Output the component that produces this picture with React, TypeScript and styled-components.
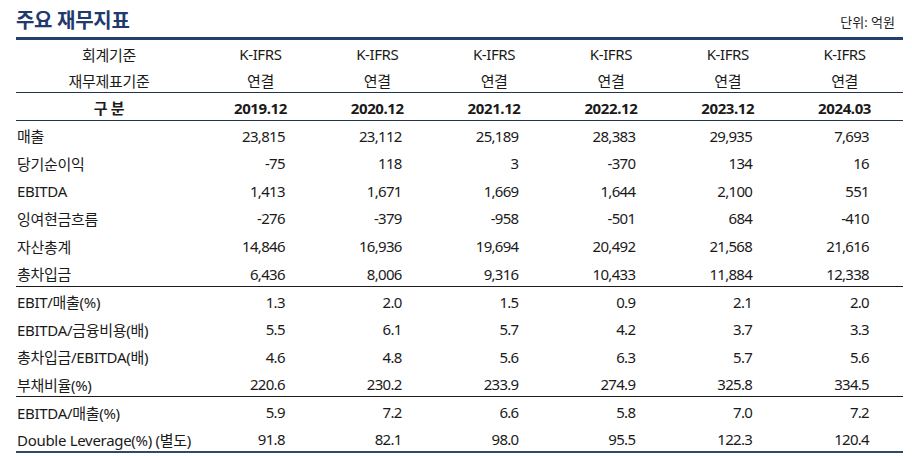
import styled, { createGlobalStyle } from 'styled-components';

const GlobalStyle = createGlobalStyle`
  html, body {
    margin: 0;
    padding: 0;
    background: #fff;
  }
  body {
    font-family: 'Noto Sans', 'Noto Sans CJK KR', sans-serif;
    color: #1a1a1a;
  }
`;

const Page = styled.div`
  width: 887px;
  padding: 0 9px 0 16px;
`;

const TitleBar = styled.div`
  display: flex;
  justify-content: space-between;
  align-items: flex-end;
  height: 37px;
`;

const Title = styled.h2`
  margin: 0 0 5px 0;
  font-size: 20px;
  font-weight: 700;
  color: #1f3a6e;
  line-height: 22px;
  letter-spacing: -0.3px;
`;

const Unit = styled.span`
  font-size: 13px;
  color: #222;
  margin: 0 8px 7px 0;
  line-height: 16px;
`;

const Table = styled.table`
  width: 100%;
  border-collapse: collapse;
  table-layout: fixed;
  border-top: 3px solid #23406e;
  border-bottom: 2px solid #2e4a68;
  font-size: 15px;

  td {
    padding-top: 3px;
    padding-bottom: 0;
  }
`;

const Row = styled.tr<{ $h?: number; $line?: 'navy' | 'dark' }>`
  height: ${(p) => p.$h ?? 27.7}px;
  border-bottom: ${(p) =>
    p.$line === 'navy' ? '1px solid #1f3550' : p.$line === 'dark' ? '1px solid #1c1c1c' : 'none'};
`;

const LabelCell = styled.td<{ $center?: boolean; $bold?: boolean }>`
  width: 184px;
  padding-left: 1px;
  text-align: ${(p) => (p.$center ? 'center' : 'left')};
  font-weight: ${(p) => (p.$bold ? 700 : 400)};
  white-space: nowrap;
  letter-spacing: -0.3px;
`;

const HeadCell = styled.td<{ $bold?: boolean }>`
  text-align: center;
  font-weight: ${(p) => (p.$bold ? 700 : 400)};
  letter-spacing: -0.4px;
`;

const NumCell = styled.td`
  text-align: right;
  padding-right: 34px;
  letter-spacing: -0.7px;
`;

const years = ['2019.12', '2020.12', '2021.12', '2022.12', '2023.12', '2024.03'];

type DataRow = { label: string; values: string[]; line?: 'navy' | 'dark' };

const rows: DataRow[] = [
  { label: '매출', values: ['23,815', '23,112', '25,189', '28,383', '29,935', '7,693'] },
  { label: '당기순이익', values: ['-75', '118', '3', '-370', '134', '16'] },
  { label: 'EBITDA', values: ['1,413', '1,671', '1,669', '1,644', '2,100', '551'] },
  { label: '잉여현금흐름', values: ['-276', '-379', '-958', '-501', '684', '-410'] },
  { label: '자산총계', values: ['14,846', '16,936', '19,694', '20,492', '21,568', '21,616'] },
  {
    label: '총차입금',
    values: ['6,436', '8,006', '9,316', '10,433', '11,884', '12,338'],
    line: 'dark',
  },
  { label: 'EBIT/매출(%)', values: ['1.3', '2.0', '1.5', '0.9', '2.1', '2.0'] },
  { label: 'EBITDA/금융비용(배)', values: ['5.5', '6.1', '5.7', '4.2', '3.7', '3.3'] },
  { label: '총차입금/EBITDA(배)', values: ['4.6', '4.8', '5.6', '6.3', '5.7', '5.6'] },
  {
    label: '부채비율(%)',
    values: ['220.6', '230.2', '233.9', '274.9', '325.8', '334.5'],
    line: 'dark',
  },
  { label: 'EBITDA/매출(%)', values: ['5.9', '7.2', '6.6', '5.8', '7.0', '7.2'] },
  { label: 'Double Leverage(%) (별도)', values: ['91.8', '82.1', '98.0', '95.5', '122.3', '120.4'] },
];

export default function App() {
  return (
    <Page>
      <GlobalStyle />
      <TitleBar>
        <Title>주요 재무지표</Title>
        <Unit>단위: 억원</Unit>
      </TitleBar>
      <Table>
        <tbody>
          <Row $h={27}>
            <LabelCell $center>회계기준</LabelCell>
            {years.map((y) => (
              <HeadCell key={y}>K-IFRS</HeadCell>
            ))}
          </Row>
          <Row $h={27} $line="navy">
            <LabelCell $center>재무제표기준</LabelCell>
            {years.map((y) => (
              <HeadCell key={y}>연결</HeadCell>
            ))}
          </Row>
          <Row $h={27.5} $line="navy">
            <LabelCell $center $bold>
              구 분
            </LabelCell>
            {years.map((y) => (
              <HeadCell key={y} $bold>
                {y}
              </HeadCell>
            ))}
          </Row>
          {rows.map((r) => (
            <Row key={r.label} $line={r.line}>
              <LabelCell>{r.label}</LabelCell>
              {r.values.map((v, i) => (
                <NumCell key={i}>{v}</NumCell>
              ))}
            </Row>
          ))}
        </tbody>
      </Table>
    </Page>
  );
}
